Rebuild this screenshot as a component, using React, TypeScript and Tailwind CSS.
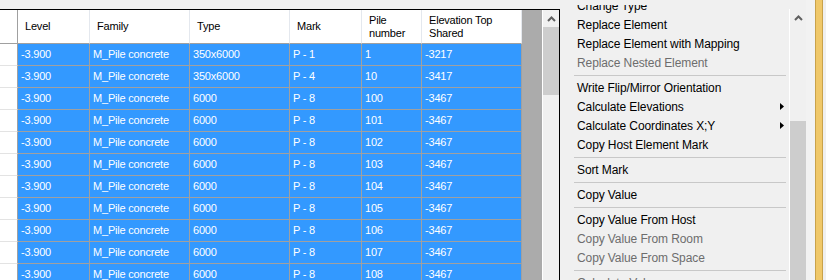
import React from "react";

const rows: string[][] = [
  ["-3.900", "M_Pile concrete", "350x6000", "P - 1", "1", "-3217"],
  ["-3.900", "M_Pile concrete", "350x6000", "P - 4", "10", "-3417"],
  ...["100", "101", "102", "103", "104", "105", "106", "107", "108"].map((n) => [
    "-3.900",
    "M_Pile concrete",
    "6000",
    "P - 8",
    n,
    "-3467",
  ]),
];

const headers: string[][] = [
  ["Level"],
  ["Family"],
  ["Type"],
  ["Mark"],
  ["Pile", "number"],
  ["Elevation Top", "Shared"],
];

type MenuEntry = { t: "item"; label: string; disabled?: boolean; sub?: boolean } | { t: "sep" };

const menu: MenuEntry[] = [
  { t: "item", label: "Change Type" },
  { t: "item", label: "Replace Element" },
  { t: "item", label: "Replace Element with Mapping" },
  { t: "item", label: "Replace Nested Element", disabled: true },
  { t: "sep" },
  { t: "item", label: "Write Flip/Mirror Orientation" },
  { t: "item", label: "Calculate Elevations", sub: true },
  { t: "item", label: "Calculate Coordinates X;Y", sub: true },
  { t: "item", label: "Copy Host Element Mark" },
  { t: "sep" },
  { t: "item", label: "Sort Mark" },
  { t: "sep" },
  { t: "item", label: "Copy Value" },
  { t: "sep" },
  { t: "item", label: "Copy Value From Host" },
  { t: "item", label: "Copy Value From Room", disabled: true },
  { t: "item", label: "Copy Value From Space", disabled: true },
  { t: "sep" },
  { t: "item", label: "Calculate Value", disabled: true },
];

function UpChevron() {
  return (
    <svg width="9" height="6" viewBox="0 0 9 6">
      <polyline points="1,5 4.5,1.5 8,5" fill="none" stroke="#606060" strokeWidth="2" />
    </svg>
  );
}

export default function App() {
  return (
    <div className="w-[826px] h-[280px] overflow-hidden bg-[#f0f0f0] flex font-['Liberation_Sans',Arial,sans-serif]">
      {/* Left grid panel */}
      <div className="w-[560px] shrink-0 pt-[9px] flex flex-col">
        <div className="flex-1 min-h-0 border-t border-r border-black flex overflow-hidden">
          <div className="w-[522px] shrink-0 grid grid-cols-[18px_72px_100px_100px_72px_60px_100px] grid-rows-[34px] auto-rows-[22px] content-start bg-white text-[11px] tracking-[-0.2px]">
            <div className="bg-white border-r border-b border-[#a0a0a0]" />
            {headers.map((h, i) => (
              <div
                key={i}
                className="bg-white border-r border-r-[#e4e8ee] border-b border-b-[#a0a0a0] px-[7px] flex flex-col justify-center leading-[13px] text-black"
              >
                {h.map((l, j) => (
                  <span key={j} className="whitespace-nowrap">
                    {l}
                  </span>
                ))}
              </div>
            ))}
            {rows.map((r, ri) => (
              <React.Fragment key={ri}>
                <div className="bg-white border-r border-r-[#a0a0a0] border-b border-b-[#e3e3e3]" />
                {r.map((c, ci) => (
                  <div
                    key={ci}
                    className="bg-[#3399ff] text-white border-r border-b border-[#a0a0a0] pl-[3px] flex items-center whitespace-nowrap overflow-hidden"
                  >
                    {c}
                  </div>
                ))}
              </React.Fragment>
            ))}
          </div>
          <div className="w-[20px] shrink-0 bg-[#ababab]" />
          <div className="w-[17px] shrink-0 border-l border-white bg-[#f0f0f0] flex flex-col">
            <div className="h-[17px] flex items-center justify-center">
              <UpChevron />
            </div>
            <div className="h-[68px] bg-[#cdcdcd]" />
          </div>
        </div>
      </div>

      {/* Context menu */}
      <div className="w-[229px] shrink-0 pt-[5px] flex flex-col text-[12px] tracking-[-0.1px]">
        <div className="flex-1 min-h-0 overflow-hidden">
          <div className="-mt-[9px] flex flex-col">
            {menu.map((m, i) =>
              m.t === "sep" ? (
                <div key={i} className="h-[6px] shrink-0 pt-[3px] pl-[14px] pr-[3px]">
                  <div className="h-px bg-[#c8c8c8]" />
                </div>
              ) : (
                <div
                  key={i}
                  className={`h-[19px] shrink-0 pl-[17px] pr-[5px] flex items-center whitespace-nowrap ${
                    m.disabled ? "text-[#6d6d6d]" : "text-black"
                  }`}
                >
                  <span>{m.label}</span>
                  {m.sub && (
                    <svg className="ml-auto" width="4" height="7" viewBox="0 0 4 7">
                      <polygon points="0,0 4,3.5 0,7" fill="#000" />
                    </svg>
                  )}
                </div>
              )
            )}
          </div>
        </div>
      </div>

      {/* Menu scrollbar */}
      <div className="w-[17px] shrink-0 pt-[9px] flex flex-col">
        <div className="flex-1 border-l border-white bg-[#f0f0f0] flex flex-col">
          <div className="h-[17px] flex items-center justify-center">
            <UpChevron />
          </div>
          <div className="h-[95px]" />
          <div className="flex-1 bg-[#cdcdcd]" />
        </div>
      </div>

      <div className="w-[9px] shrink-0 bg-[#f2f2f2]" />
      <div className="w-[8px] shrink-0 border-l border-r border-[#c9a24a] bg-[#f0c869]" />
      <div className="w-[3px] shrink-0 bg-[#f0f0f0]" />
    </div>
  );
}
